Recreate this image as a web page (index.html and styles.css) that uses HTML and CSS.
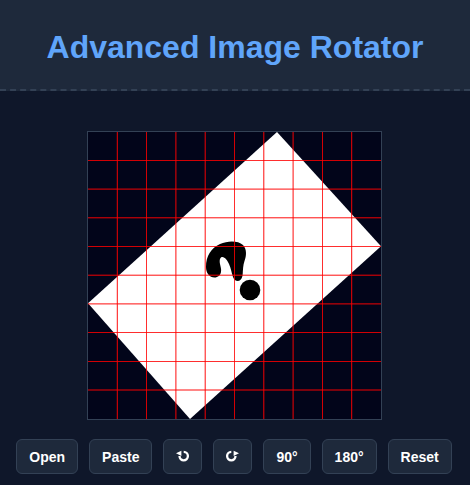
FILE: index.html
```html
<!DOCTYPE html>
<html lang="en">
<head>
<meta charset="utf-8">
<title>Advanced Image Rotator</title>
<link rel="stylesheet" href="styles.css">
</head>
<body>
<header class="header"><h1 class="title">Advanced Image Rotator</h1></header>
<main class="main">
  <div class="stage">
    <svg class="art" viewBox="0 0 293 287" preserveAspectRatio="none" aria-hidden="true">
      <rect width="293" height="287" fill="#02051a"/>
      <polygon points="189,0 293,114.300 102,287 0,171.300" fill="#fff"/>
      <path d="M118 135 C118 124 123 116 132 112 C140 108.500 150 108.500 155 113 C159 117 158.500 124 156.500 129 C155 133 155 138 154.700 142 C154.500 146 152.500 149 150 149 C147.500 149 146 147.500 145 145 C143.500 141 143 136 141 132 C139.500 128.500 136.500 124.500 134 125 C131.500 125.500 131.500 129 132 132 C132.500 135 133.500 137 133 140 C132.500 143 130 145.500 126.500 145.500 C121.500 145.500 118 141 118 135 Z" fill="#000"/>
      <circle cx="162" cy="158" r="10.300" fill="#000"/>
      <g class="grid">
        <path class="soft" d="M29.300 0V287M87.900 0V287M117.200 0V287M175.800 0V287M205.100 0V287M263.700 0V287M0 57.100H293M0 85.800H293M0 143.200H293M0 171.900H293M0 258H293"/>
        <path class="firm" d="M58.500 0V287M146.500 0V287M234.500 0V287M0 28.500H293M0 114.500H293M0 200.500H293M0 229.500H293"/>
      </g>
    </svg>
  </div>
</main>
<nav class="toolbar">
  <button class="btn" type="button">Open</button>
  <button class="btn" type="button">Paste</button>
  <button class="btn" type="button" aria-label="Rotate left"><svg class="icon" viewBox="0 0 13 11"><path class="ring" d="M7.700 0.900 A4.200 4.200 0 1 1 3.500 5.100"/><path class="tip" d="M0 2.300 L5.400 -0.300 L5.400 5 Z"/></svg></button>
  <button class="btn" type="button" aria-label="Rotate right"><svg class="icon" viewBox="0 0 13 11"><path class="ring" d="M5.300 0.900 A4.200 4.200 0 1 0 9.500 5.100"/><path class="tip" d="M13 2.300 L7.600 -0.300 L7.600 5 Z"/></svg></button>
  <button class="btn" type="button">90°</button>
  <button class="btn" type="button">180°</button>
  <button class="btn" type="button">Reset</button>
</nav>
</body>
</html>
```
FILE: styles.css
```css
* { box-sizing: border-box; }
body {
  margin: 0;
  height: 485px;
  overflow: hidden;
  background: #0f172a;
  font-family: "Liberation Sans", Arial, sans-serif;
}
.header {
  height: 91px;
  display: flex;
  justify-content: center;
  padding-top: 29px;
  background: #1e293b;
  border-bottom: 2px dashed #334155;
}
.title {
  margin: 0;
  font-size: 32px;
  font-weight: 700;
  line-height: 37px;
  color: #60a5fa;
}
.main {
  display: flex;
  justify-content: center;
  padding: 40px 1px 19px 0;
}
.stage {
  width: 295px;
  height: 289px;
  border: 1px solid #334155;
}
.art { display: block; width: 293px; height: 287px; }
.grid path { fill: none; stroke: #f00; stroke-width: 1; }
.grid .soft { stroke-opacity: 0.95; }
.grid .firm { stroke-opacity: 0.82; }
.toolbar {
  display: flex;
  justify-content: center;
  gap: 11px;
  padding-right: 2px;
}
.btn {
  height: 35px;
  padding: 0 12px;
  border: 1px solid #334155;
  border-radius: 6px;
  background: #1e293b;
  color: #fff;
  font-family: inherit;
  font-size: 14px;
  font-weight: 700;
}
.icon { display: block; width: 13px; height: 11px; overflow: visible; }
.ring { fill: none; stroke: #fff; stroke-width: 2.300; }
.tip { fill: #fff; }
```
